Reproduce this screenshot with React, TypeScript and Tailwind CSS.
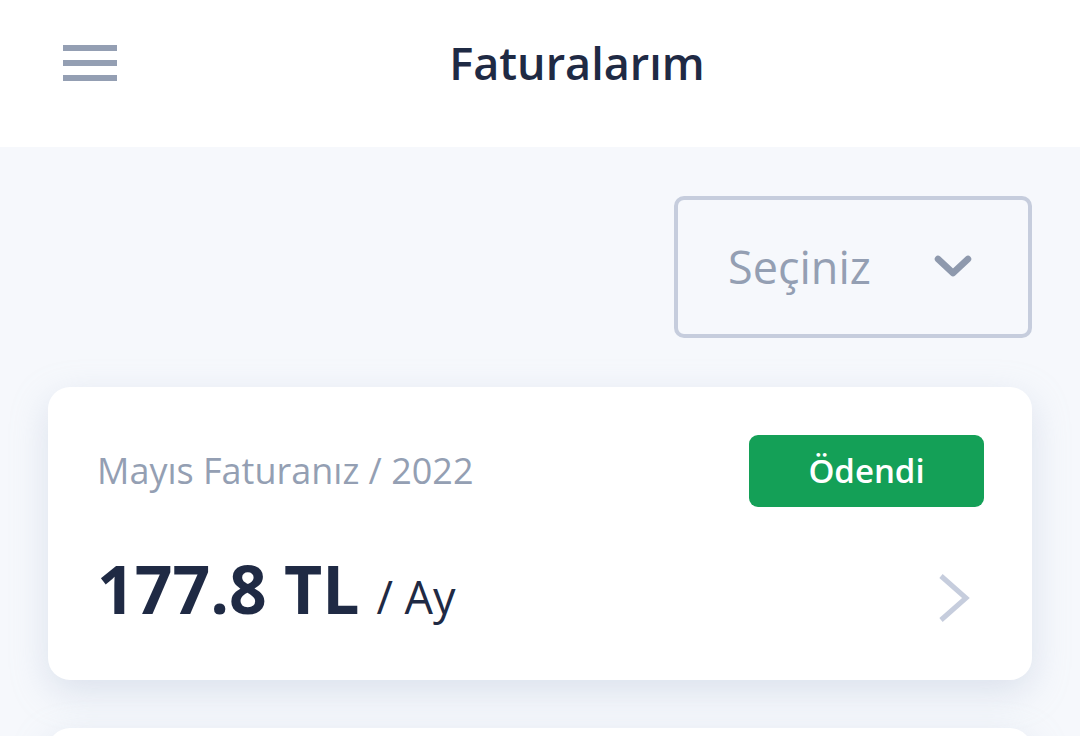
import React from 'react';

const font = { fontFamily: '"Open Sans", "Noto Sans", sans-serif' };

const Hamburger = () => (
  <div className="flex w-[54px] flex-col gap-[9px]">
    <span className="h-[6px] bg-[#949fb3]" />
    <span className="h-[6px] bg-[#949fb3]" />
    <span className="h-[6px] bg-[#949fb3]" />
  </div>
);

const ChevronDown = () => (
  <svg width="38" height="24" viewBox="0 0 38 24" fill="none">
    <path d="M4 4 L19 18 L34 4" stroke="#8e99ad" strokeWidth="6.5" strokeLinecap="round" strokeLinejoin="round" />
  </svg>
);

const ChevronRight = () => (
  <svg width="32" height="50" viewBox="0 0 32 50" fill="none">
    <path d="M3 3 L28 25 L3 47" stroke="#c6cddd" strokeWidth="5" />
  </svg>
);

const InvoiceCard: React.FC<{ title: string; amount: string; status: string }> = ({ title, amount, status }) => (
  <div className="rounded-[22px] bg-white pl-[49px] pr-[48px] pt-[48px] pb-[57px] shadow-[0_12px_36px_rgba(170,184,210,0.35)]">
    <div className="flex items-center justify-between">
      <span className="text-[36px] leading-none text-[#949fb3]">{title}</span>
      <span className="flex h-[72px] w-[235px] items-center justify-center rounded-[9px] bg-[#14a057] text-[33px] font-semibold text-white">
        {status}
      </span>
    </div>
    <div className="mt-[46px] flex items-center justify-between">
      <div className="flex items-baseline">
        <span className="text-[66px] font-bold leading-none text-[#1f2a44]">{amount}</span>
        <span className="ml-[17px] text-[45px] leading-none text-[#1f2a44]">/ Ay</span>
      </div>
      <div className="mr-[14px] mt-[20px]">
        <ChevronRight />
      </div>
    </div>
  </div>
);

export default function App() {
  return (
    <div className="h-[736px] w-[1080px] overflow-hidden bg-[#f6f8fc]" style={font}>
      <header className="flex h-[147px] items-center bg-white px-[63px] pb-[21px]">
        <Hamburger />
        <h1 className="flex-1 pl-[20px] text-center text-[45px] font-semibold text-[#1f2a44]">Faturalarım</h1>
      </header>

      <div className="px-[48px] pt-[49px]">
        <div className="flex justify-end">
          <button className="flex h-[142px] w-[358px] items-center justify-between rounded-[10px] border-[4px] border-[#c6cddd] pl-[50px] pr-[56px]">
            <span className="text-[45px] text-[#949fb3]">Seçiniz</span>
            <ChevronDown />
          </button>
        </div>

        <div className="mt-[49px] flex flex-col gap-[48px]">
          <InvoiceCard title="Mayıs Faturanız / 2022" amount="177.8 TL" status="Ödendi" />
          <InvoiceCard title="Nisan Faturanız / 2022" amount="177.8 TL" status="Ödendi" />
        </div>
      </div>
    </div>
  );
}
